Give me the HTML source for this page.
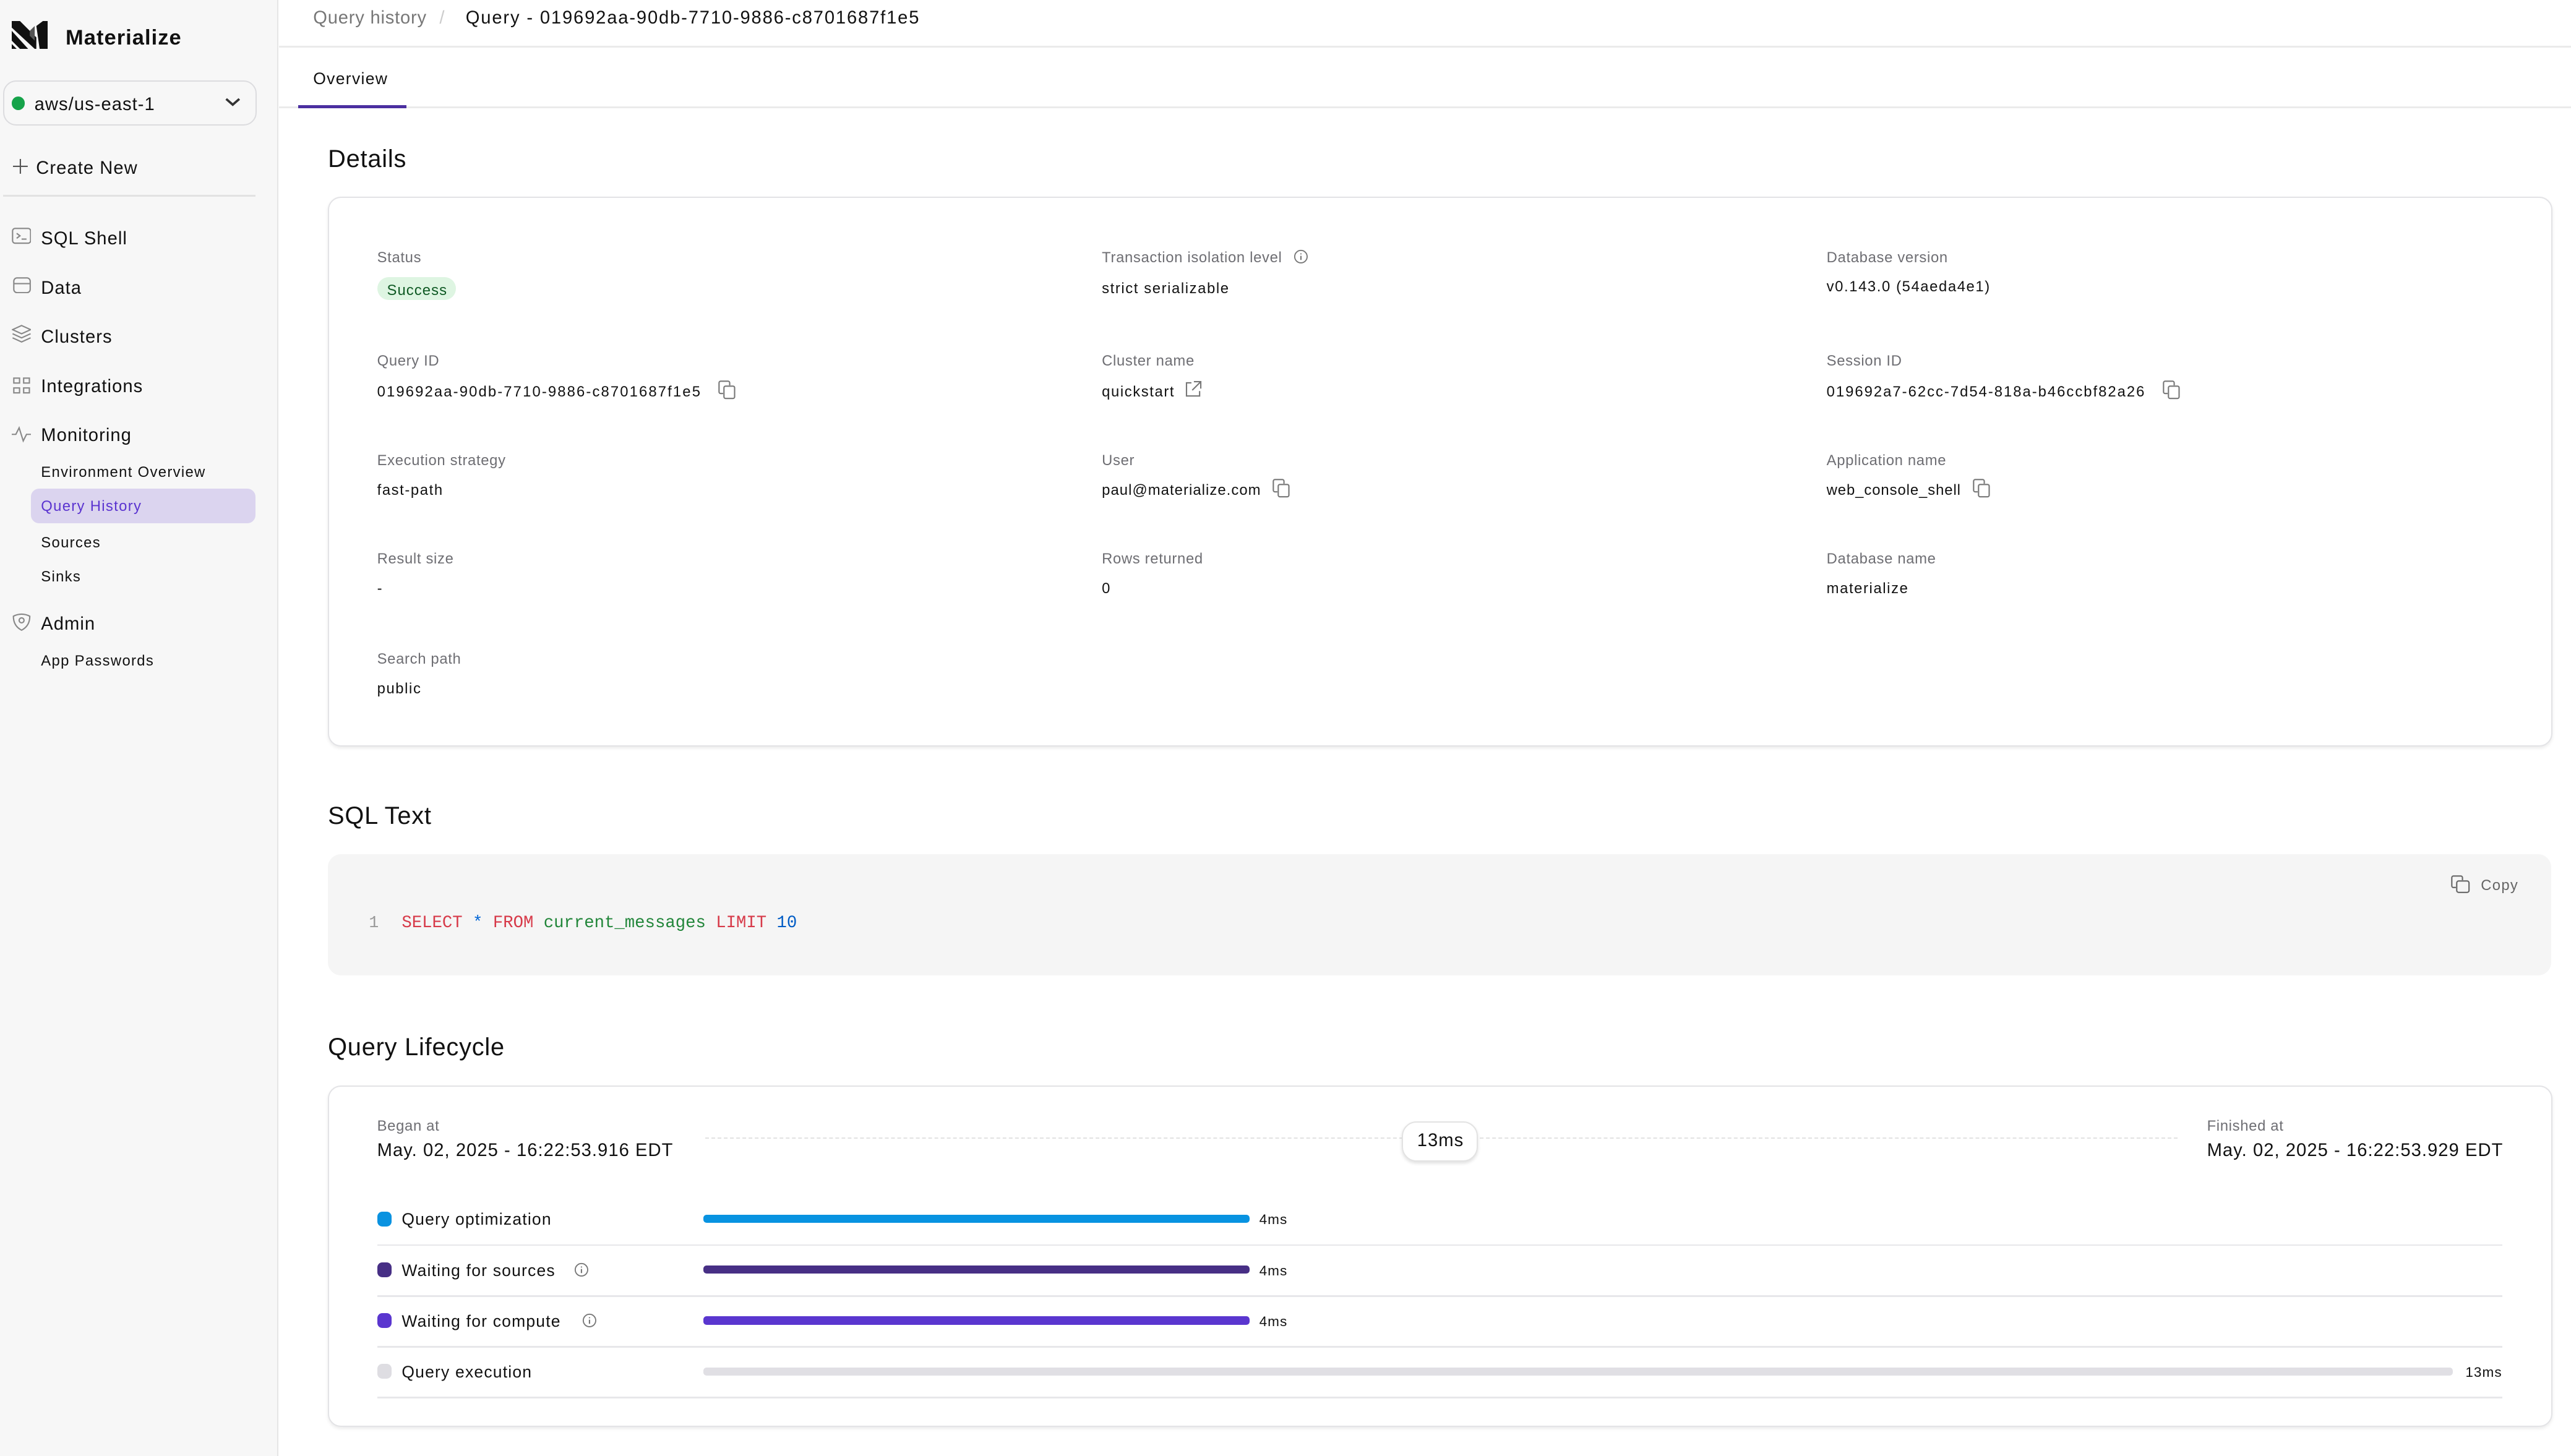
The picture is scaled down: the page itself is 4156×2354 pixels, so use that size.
<!DOCTYPE html>
<html><head><meta charset="utf-8"><style>
html,body{margin:0;padding:0;background:#fff;overflow:hidden}
#root{zoom:2.6505;position:relative;width:1568px;height:888px;font-family:"Liberation Sans",sans-serif;color:#111;letter-spacing:.4px}
.t{position:absolute;line-height:14px;white-space:nowrap}
.lbl{font-size:9px;color:#6e6e73;letter-spacing:.25px}
.val{font-size:9px;color:#111;letter-spacing:.6px}
.nav{font-size:11px;color:#111}
.sub{font-size:9px;color:#111;letter-spacing:.5px}
.h{font-size:15px;line-height:20px;letter-spacing:.3px}
.card{position:absolute;background:#fff;border:1px solid #e3e3e6;border-radius:8px;box-shadow:0 1px 2px rgba(0,0,0,.08)}
.ic{position:absolute}
.sep{position:absolute;left:230px;width:1296px;height:1px;background:#e7e7ea}
.bar{position:absolute;left:429px;height:5px;border-radius:2px}
.dot{position:absolute;left:230px;width:9px;height:9px;border-radius:3px}
.mono{font-family:"Liberation Mono",monospace;letter-spacing:.2px}
</style></head><body><div id="root">
<!-- sidebar -->
<div style="position:absolute;left:0;top:0;width:169px;height:888px;background:#f7f7f7;border-right:1px solid #e6e6e6"></div>
<svg class="ic" style="left:7px;top:13px" width="22" height="17" viewBox="0 0 22 17"><path d="M0 0h5l10 10v7h-1L0 4z M0 6l10 11H5L0 12z M0 14l3 3H0z" fill="#111"/><path d="M15 3l4-3h3v17h-5z" fill="#111"/><path d="M11 6l3-3v9l-3-3z" fill="#555"/></svg>
<div class="t" style="left:40px;top:15px;font-size:13px;font-weight:600;line-height:16px">Materialize</div>
<div style="position:absolute;left:2px;top:49px;width:153px;height:26px;border:1px solid #dcdcdf;border-radius:8px;background:#f7f7f7"></div>
<div style="position:absolute;left:7px;top:59px;width:8px;height:8px;border-radius:50%;background:#16a34a"></div>
<div class="t" style="left:21px;top:57px;font-size:11px">aws/us-east-1</div>
<svg class="ic" style="left:137px;top:59px" width="10" height="7" viewBox="0 0 10 7"><path d="M1 1.5l4 3.5 4-3.5" stroke="#333" stroke-width="1.4" fill="none"/></svg>
<svg class="ic" style="left:8px;top:97px" width="9" height="9" viewBox="0 0 9 9"><path d="M4.5 0v9M0 4.5h9" stroke="#555" stroke-width="0.8"/></svg>
<div class="t nav" style="left:22px;top:96px">Create New</div>
<div style="position:absolute;left:2px;top:119px;width:154px;height:1px;background:#e2e2e2"></div>
<svg class="ic" style="left:7px;top:139px" width="12" height="10" viewBox="0 0 12 10"><rect x=".5" y=".5" width="11" height="9" rx="1.5" fill="none" stroke="#888" stroke-width=".8"/><path d="M3 3.5l2 1.5-2 1.5M6 7h3" stroke="#888" stroke-width=".8" fill="none"/></svg>
<div class="t nav" style="left:25px;top:139px">SQL Shell</div>
<svg class="ic" style="left:8px;top:169px" width="11" height="10" viewBox="0 0 11 10"><rect x=".5" y=".5" width="10" height="9" rx="2" fill="none" stroke="#888" stroke-width=".8"/><path d="M.5 4h10" stroke="#888" stroke-width=".8"/></svg>
<div class="t nav" style="left:25px;top:169px">Data</div>
<svg class="ic" style="left:7px;top:198px" width="12" height="11" viewBox="0 0 12 11"><path d="M6 .5L11.5 3 6 5.5.5 3z M.5 5.5L6 8l5.5-2.5 M.5 8L6 10.5 11.5 8" fill="none" stroke="#888" stroke-width=".8"/></svg>
<div class="t nav" style="left:25px;top:199px">Clusters</div>
<svg class="ic" style="left:8px;top:230px" width="11" height="11" viewBox="0 0 11 11"><rect x=".5" y=".5" width="3.5" height="3" fill="none" stroke="#888" stroke-width=".8"/><rect x="6.5" y=".5" width="3.5" height="3" fill="none" stroke="#888" stroke-width=".8"/><rect x=".5" y="6.5" width="3.5" height="3" fill="none" stroke="#888" stroke-width=".8"/><rect x="6.5" y="6.5" width="3.5" height="3" fill="none" stroke="#888" stroke-width=".8"/></svg>
<div class="t nav" style="left:25px;top:229px">Integrations</div>
<svg class="ic" style="left:7px;top:260px" width="12" height="10" viewBox="0 0 12 10"><path d="M0 5h2.5l2-4 2.5 8 2-4H12" fill="none" stroke="#888" stroke-width=".8"/></svg>
<div class="t nav" style="left:25px;top:259px">Monitoring</div>
<div class="t sub" style="left:25px;top:281px">Environment Overview</div>
<div style="position:absolute;left:19px;top:298px;width:137px;height:21px;border-radius:5px;background:#dbd4ef"></div>
<div class="t sub" style="left:25px;top:302px;color:#5b34d0">Query History</div>
<div class="t sub" style="left:25px;top:324px">Sources</div>
<div class="t sub" style="left:25px;top:345px">Sinks</div>
<svg class="ic" style="left:7px;top:374px" width="12" height="11" viewBox="0 0 12 11"><path d="M1 2Q6-.5 11 2Q11 8 6 10.5Q1 8 1 2z" fill="none" stroke="#888" stroke-width=".8"/><circle cx="6" cy="4.5" r="1.5" fill="none" stroke="#888" stroke-width=".8"/></svg>
<div class="t nav" style="left:25px;top:374px">Admin</div>
<div class="t sub" style="left:25px;top:396px">App Passwords</div>

<!-- header -->
<div class="t" style="left:191px;top:4px;font-size:11px;color:#777;letter-spacing:.3px">Query history</div>
<div class="t" style="left:268px;top:4px;font-size:11px;color:#ccc">/</div>
<div class="t" style="left:284px;top:4px;font-size:11px;letter-spacing:.7px">Query - 019692aa-90db-7710-9886-c8701687f1e5</div>
<div style="position:absolute;left:170px;top:28px;width:1398px;height:1px;background:#ebebeb"></div>
<div class="t" style="left:191px;top:41px;font-size:10px;letter-spacing:.5px">Overview</div>
<div style="position:absolute;left:170px;top:65px;width:1398px;height:1px;background:#ebebeb"></div>
<div style="position:absolute;left:182px;top:64px;width:66px;height:2px;background:#4b2fa0"></div>

<!-- details -->
<div class="t h" style="left:200px;top:87px">Details</div>
<div class="card" style="left:200px;top:120px;width:1355px;height:334px"></div>
<div class="t lbl" style="left:230px;top:150px">Status</div>
<div style="position:absolute;left:230px;top:169px;width:48px;height:14px;border-radius:7px;background:#def5e2"></div>
<div class="t" style="left:236px;top:170px;font-size:9px;color:#0f5a24;letter-spacing:.4px">Success</div>
<div class="t lbl" style="left:672px;top:150px">Transaction isolation level</div>
<svg class="ic" style="left:789px;top:152px" width="9" height="9" viewBox="0 0 9 9"><circle cx="4.5" cy="4.5" r="3.8" fill="none" stroke="#777" stroke-width=".7"/><path d="M4.5 4v2.5M4.5 2.5v.6" stroke="#777" stroke-width=".8"/></svg>
<div class="t val" style="left:672px;top:169px">strict serializable</div>
<div class="t lbl" style="left:1114px;top:150px">Database version</div>
<div class="t val" style="left:1114px;top:168px">v0.143.0 (54aeda4e1)</div>

<div class="t lbl" style="left:230px;top:213px">Query ID</div>
<div class="t val" style="left:230px;top:232px;letter-spacing:.8px">019692aa-90db-7710-9886-c8701687f1e5</div>
<svg class="ic cp" style="left:438px;top:232px" width="11" height="12" viewBox="0 0 11 12"><path d="M3 8H1.5A1 1 0 0 1 .5 7V1.5A1 1 0 0 1 1.5.5H6A1 1 0 0 1 7 1.5V3" fill="none" stroke="#777" stroke-width=".8"/><rect x="3.5" y="3.5" width="6.5" height="7.5" rx="1" fill="none" stroke="#777" stroke-width=".8"/></svg>
<div class="t lbl" style="left:672px;top:213px">Cluster name</div>
<div class="t val" style="left:672px;top:232px">quickstart</div>
<svg class="ic" style="left:722px;top:232px" width="11" height="11" viewBox="0 0 11 11"><path d="M4.5 1.5H1.5v8h8v-3M6 .8h4.2V5M10.2.8L5 6" fill="none" stroke="#777" stroke-width=".8"/></svg>
<div class="t lbl" style="left:1114px;top:213px">Session ID</div>
<div class="t val" style="left:1114px;top:232px;letter-spacing:.75px">019692a7-62cc-7d54-818a-b46ccbf82a26</div>
<svg class="ic" style="left:1319px;top:232px" width="11" height="12" viewBox="0 0 11 12"><path d="M3 8H1.5A1 1 0 0 1 .5 7V1.5A1 1 0 0 1 1.5.5H6A1 1 0 0 1 7 1.5V3" fill="none" stroke="#777" stroke-width=".8"/><rect x="3.5" y="3.5" width="6.5" height="7.5" rx="1" fill="none" stroke="#777" stroke-width=".8"/></svg>

<div class="t lbl" style="left:230px;top:274px">Execution strategy</div>
<div class="t val" style="left:230px;top:292px">fast-path</div>
<div class="t lbl" style="left:672px;top:274px">User</div>
<div class="t val" style="left:672px;top:292px;letter-spacing:.4px">paul@materialize.com</div>
<svg class="ic" style="left:776px;top:292px" width="11" height="12" viewBox="0 0 11 12"><path d="M3 8H1.5A1 1 0 0 1 .5 7V1.5A1 1 0 0 1 1.5.5H6A1 1 0 0 1 7 1.5V3" fill="none" stroke="#777" stroke-width=".8"/><rect x="3.5" y="3.5" width="6.5" height="7.5" rx="1" fill="none" stroke="#777" stroke-width=".8"/></svg>
<div class="t lbl" style="left:1114px;top:274px">Application name</div>
<div class="t val" style="left:1114px;top:292px;letter-spacing:.35px">web_console_shell</div>
<svg class="ic" style="left:1203px;top:292px" width="11" height="12" viewBox="0 0 11 12"><path d="M3 8H1.5A1 1 0 0 1 .5 7V1.5A1 1 0 0 1 1.5.5H6A1 1 0 0 1 7 1.5V3" fill="none" stroke="#777" stroke-width=".8"/><rect x="3.5" y="3.5" width="6.5" height="7.5" rx="1" fill="none" stroke="#777" stroke-width=".8"/></svg>

<div class="t lbl" style="left:230px;top:334px">Result size</div>
<div class="t val" style="left:230px;top:352px">-</div>
<div class="t lbl" style="left:672px;top:334px">Rows returned</div>
<div class="t val" style="left:672px;top:352px">0</div>
<div class="t lbl" style="left:1114px;top:334px">Database name</div>
<div class="t val" style="left:1114px;top:352px">materialize</div>
<div class="t lbl" style="left:230px;top:395px">Search path</div>
<div class="t val" style="left:230px;top:413px">public</div>

<!-- SQL -->
<div class="t h" style="left:200px;top:488px">SQL Text</div>
<div style="position:absolute;left:200px;top:521px;width:1356px;height:74px;background:#f5f5f5;border-radius:8px"></div>
<div class="t mono" style="left:225px;top:556px;font-size:10px;color:#999">1</div>
<div class="t mono" style="left:245px;top:556px;font-size:10.3px;letter-spacing:0"><span style="color:#d73a49">SELECT</span> <span style="color:#0366d6">*</span> <span style="color:#d73a49">FROM</span> <span style="color:#22863a">current_messages</span> <span style="color:#d73a49">LIMIT</span> <span style="color:#005cc5">10</span></div>
<svg class="ic" style="left:1495px;top:534px" width="12" height="11" viewBox="0 0 12 11"><path d="M3 7.5H1.5A1 1 0 0 1 .5 6.5V1.5A1 1 0 0 1 1.5.5H6A1 1 0 0 1 7 1.5V3" fill="none" stroke="#666" stroke-width=".8"/><rect x="3.5" y="3.5" width="7.5" height="7" rx="1.2" fill="none" stroke="#666" stroke-width=".8"/></svg>
<div class="t" style="left:1513px;top:533px;font-size:9px;color:#666;letter-spacing:.5px">Copy</div>

<!-- lifecycle -->
<div class="t h" style="left:200px;top:629px">Query Lifecycle</div>
<div class="card" style="left:200px;top:662px;width:1355px;height:207px"></div>
<div class="t lbl" style="left:230px;top:680px">Began at</div>
<div class="t" style="left:230px;top:695px;font-size:11px;letter-spacing:.4px">May. 02, 2025 - 16:22:53.916 EDT</div>
<div style="position:absolute;left:430px;top:694px;width:898px;border-top:1px dashed #e2e2e2"></div>
<div style="position:absolute;left:855px;top:684px;width:45px;height:23px;border:1px solid #e3e3e3;border-radius:9px;background:#fff;box-shadow:0 1px 2px rgba(0,0,0,.12)"></div>
<div class="t" style="left:855px;top:689px;width:47px;text-align:center;font-size:11px">13ms</div>
<div class="t lbl" style="left:1346px;top:680px">Finished at</div>
<div class="t" style="left:1346px;top:695px;font-size:11px;letter-spacing:.4px">May. 02, 2025 - 16:22:53.929 EDT</div>

<div class="dot" style="top:739px;background:#0a92e0"></div>
<div class="t" style="left:245px;top:737px;font-size:10px;letter-spacing:.45px">Query optimization</div>
<div class="bar" style="top:741px;width:333px;background:#0893e1"></div>
<div class="t" style="left:768px;top:737px;font-size:8.5px">4ms</div>
<div class="sep" style="top:759px"></div>
<div class="dot" style="top:770px;background:#472f85"></div>
<div class="t" style="left:245px;top:768px;font-size:10px;letter-spacing:.45px">Waiting for sources</div>
<svg class="ic" style="left:350px;top:770px" width="9" height="9" viewBox="0 0 9 9"><circle cx="4.5" cy="4.5" r="3.8" fill="none" stroke="#777" stroke-width=".7"/><path d="M4.5 4v2.5M4.5 2.5v.6" stroke="#777" stroke-width=".8"/></svg>
<div class="bar" style="top:772px;width:333px;background:#472f85"></div>
<div class="t" style="left:768px;top:768px;font-size:8.5px">4ms</div>
<div class="sep" style="top:790px"></div>
<div class="dot" style="top:801px;background:#5a36cf"></div>
<div class="t" style="left:245px;top:799px;font-size:10px;letter-spacing:.45px">Waiting for compute</div>
<svg class="ic" style="left:355px;top:801px" width="9" height="9" viewBox="0 0 9 9"><circle cx="4.5" cy="4.5" r="3.8" fill="none" stroke="#777" stroke-width=".7"/><path d="M4.5 4v2.5M4.5 2.5v.6" stroke="#777" stroke-width=".8"/></svg>
<div class="bar" style="top:803px;width:333px;background:#5a36cf"></div>
<div class="t" style="left:768px;top:799px;font-size:8.5px">4ms</div>
<div class="sep" style="top:821px"></div>
<div class="dot" style="top:832px;background:#dedde2"></div>
<div class="t" style="left:245px;top:830px;font-size:10px;letter-spacing:.45px">Query execution</div>
<div class="bar" style="top:834px;width:1067px;background:#e0dfe4"></div>
<div class="t" style="left:1488px;top:830px;width:38px;text-align:right;font-size:8.5px">13ms</div>
<div class="sep" style="top:852px"></div>
</div></body></html>
